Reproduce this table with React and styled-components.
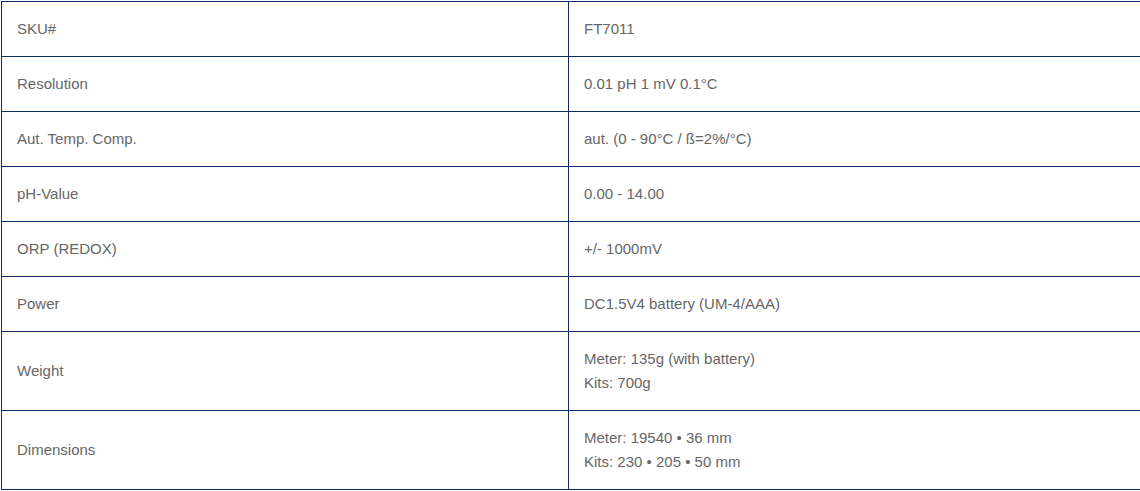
import styled, { createGlobalStyle } from "styled-components";

const GlobalStyle = createGlobalStyle`
  body {
    margin: 0;
    background: #fff;
    font-family: "Liberation Sans", Arial, sans-serif;
  }
`;

const Wrapper = styled.div`
  padding: 1px 0 0 1px;
  width: 1142px;
`;

const SpecTable = styled.table`
  width: 1142px;
  border-collapse: collapse;
  table-layout: fixed;
`;

const Cell = styled.td`
  border: 1px solid #0c2c66;
  padding: 15px;
  font-size: 15px;
  line-height: 24px;
  color: #666;
  vertical-align: middle;
  width: ${(p) => (p.$label ? "536px" : "auto")};
`;

const Line = styled.div``;

const specs = [
  ["SKU#", ["FT7011"]],
  ["Resolution", ["0.01 pH 1 mV 0.1°C"]],
  ["Aut. Temp. Comp.", ["aut. (0 - 90°C / ß=2%/°C)"]],
  ["pH-Value", ["0.00 - 14.00"]],
  ["ORP (REDOX)", ["+/- 1000mV"]],
  ["Power", ["DC1.5V4 battery (UM-4/AAA)"]],
  ["Weight", ["Meter: 135g (with battery)", "Kits: 700g"]],
  ["Dimensions", ["Meter: 19540 • 36 mm", "Kits: 230 • 205 • 50 mm"]],
];

export default function App() {
  return (
    <Wrapper>
      <GlobalStyle />
      <SpecTable>
        <tbody>
          {specs.map(([label, values]) => (
            <tr key={label}>
              <Cell $label>{label}</Cell>
              <Cell>
                {values.map((v) => (
                  <Line key={v}>{v}</Line>
                ))}
              </Cell>
            </tr>
          ))}
        </tbody>
      </SpecTable>
    </Wrapper>
  );
}
